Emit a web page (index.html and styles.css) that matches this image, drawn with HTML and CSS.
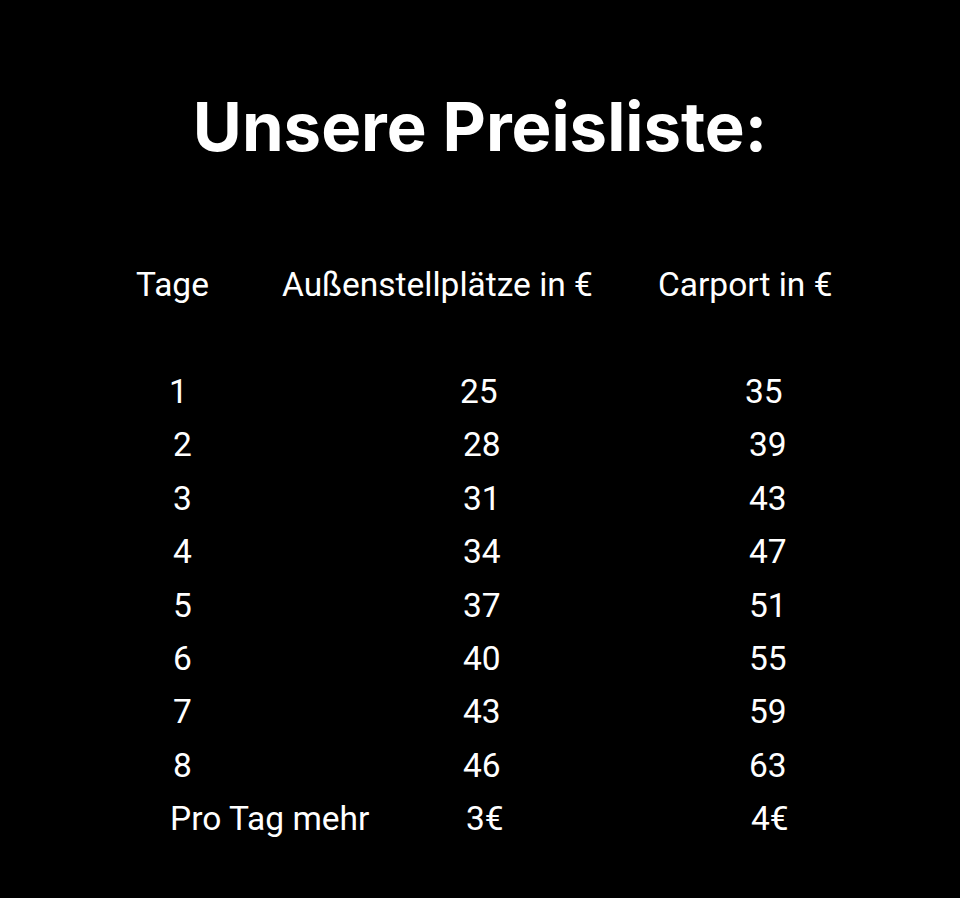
FILE: index.html
```html
<!DOCTYPE html>
<html lang="de">
<head>
<meta charset="utf-8">
<title>Preisliste</title>
<link rel="stylesheet" href="styles.css">
</head>
<body>
<main class="page">
  <h1 class="title">Unsere Preisliste:</h1>
  <div class="head">
    <span class="h-tage">Tage</span>
    <span class="h-aussen">Außenstellplätze in €</span>
    <span class="h-carport">Carport in €</span>
  </div>
  <div class="rows">
    <div class="row row-first"><span>1</span><span>25</span><span>35</span></div>
    <div class="row"><span>2</span><span>28</span><span>39</span></div>
    <div class="row"><span>3</span><span>31</span><span>43</span></div>
    <div class="row"><span>4</span><span>34</span><span>47</span></div>
    <div class="row"><span>5</span><span>37</span><span>51</span></div>
    <div class="row"><span>6</span><span>40</span><span>55</span></div>
    <div class="row"><span>7</span><span>43</span><span>59</span></div>
    <div class="row"><span>8</span><span>46</span><span>63</span></div>
    <div class="row row-last"><span>Pro Tag mehr</span><span>3€</span><span>4€</span></div>
  </div>
</main>
</body>
</html>
```

FILE: styles.css
```css
html, body {
  margin: 0;
  padding: 0;
  background: #000;
}
.page {
  width: 960px;
  height: 898px;
  background: #000;
  color: #fff;
  font-family: Roboto, "Liberation Sans", sans-serif;
  overflow: hidden;
}
.title {
  margin: 0;
  padding-top: 87px;
  text-align: center;
  font-family: Inter, "Open Sans", sans-serif;
  font-weight: 700;
  font-size: 67px;
  line-height: 80px;
  letter-spacing: 0;
}
.head {
  display: flex;
  margin-top: 98px;
  padding-left: 136px;
  font-size: 33.5px;
  line-height: 40px;
}
.h-aussen { margin-left: 73px; }
.h-carport { margin-left: 65px; }
.rows {
  margin-top: 60px;
  font-size: 33.5px;
}
.row {
  display: grid;
  grid-template-columns: 290px 286px auto;
  padding-left: 173px;
  height: 53.4px;
  line-height: 53.4px;
}
.row-first { padding-left: 169px; grid-template-columns: 291px 285px auto; }
.row-last { padding-left: 170px; grid-template-columns: 296px 285px auto; }
```
